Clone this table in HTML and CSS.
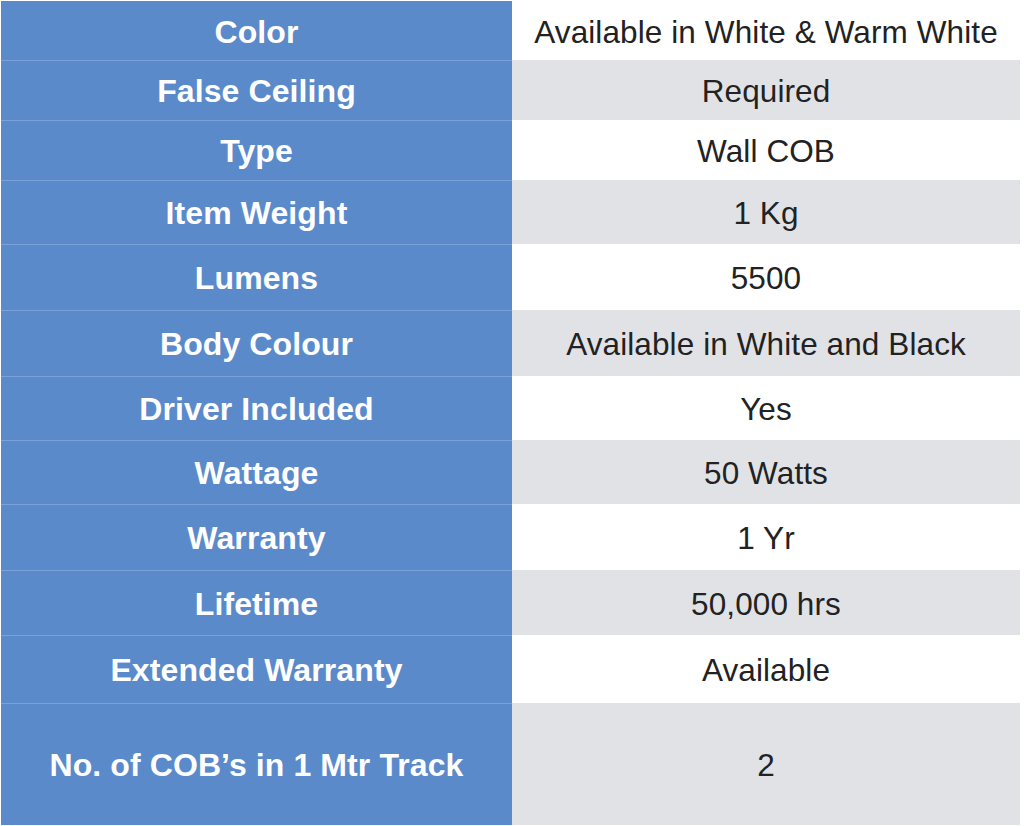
FILE: index.html
```html
<!DOCTYPE html>
<html>
<head>
<meta charset="utf-8">
<link rel="stylesheet" href="styles.css">
</head>
<body>
<div class="spec">
  <div class="row h59"><div class="key">Color</div><div class="val">Available in White &amp; Warm White</div></div>
  <div class="row alt h60"><div class="key">False Ceiling</div><div class="val">Required</div></div>
  <div class="row h60"><div class="key">Type</div><div class="val">Wall COB</div></div>
  <div class="row alt h64"><div class="key">Item Weight</div><div class="val">1 Kg</div></div>
  <div class="row h66"><div class="key">Lumens</div><div class="val">5500</div></div>
  <div class="row alt h66"><div class="key">Body Colour</div><div class="val">Available in White and Black</div></div>
  <div class="row h64"><div class="key">Driver Included</div><div class="val">Yes</div></div>
  <div class="row alt h64"><div class="key">Wattage</div><div class="val">50 Watts</div></div>
  <div class="row h66"><div class="key">Warranty</div><div class="val">1 Yr</div></div>
  <div class="row alt h65"><div class="key">Lifetime</div><div class="val">50,000 hrs</div></div>
  <div class="row h68"><div class="key">Extended Warranty</div><div class="val">Available</div></div>
  <div class="row alt h122"><div class="key">No. of COB’s in 1 Mtr Track</div><div class="val">2</div></div>
</div>
</body>
</html>
```
FILE: styles.css
```css
html, body {
  margin: 0;
  padding: 0;
  background: #ffffff;
}
body {
  width: 1024px;
  height: 826px;
  overflow: hidden;
}
.spec {
  display: flex;
  flex-direction: column;
  padding: 1px 4px 0 1px;
}
.row {
  display: grid;
  grid-template-columns: 511px 1fr;
}
.key, .val {
  display: flex;
  align-items: center;
  justify-content: center;
  text-align: center;
  padding-top: 3px;
  box-sizing: border-box;
}
.key {
  background: #5b8acb;
  color: #ffffff;
  font-family: "Liberation Sans", Arial, sans-serif;
  font-weight: bold;
  font-size: 32px;
  letter-spacing: 0.1px;
}
.row + .row .key {
  box-shadow: inset 0 1px 0 #7ba2d8;
}
.val {
  background: #ffffff;
  color: #222222;
  font-family: "Liberation Sans", Arial, sans-serif;
  font-size: 31.5px;
  letter-spacing: 0.1px;
}
.alt .val {
  background: #e1e2e6;
}
.h59 { height: 59px; }
.h60 { height: 60px; }
.h64 { height: 64px; }
.h65 { height: 65px; }
.h66 { height: 66px; }
.h68 { height: 68px; }
.h122 { height: 122px; }
```
